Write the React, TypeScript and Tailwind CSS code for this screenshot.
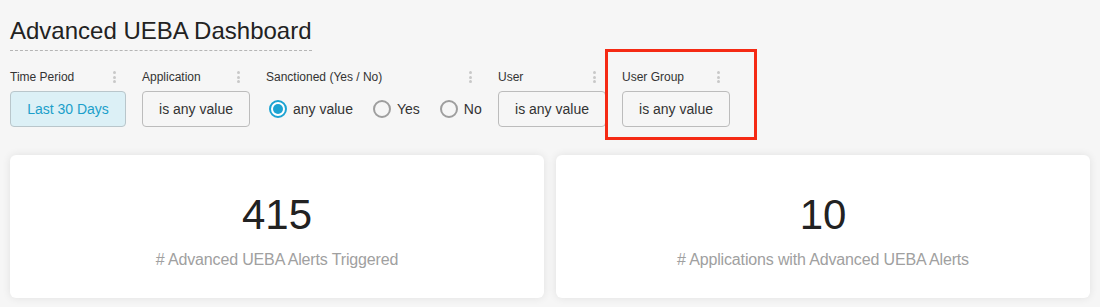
import React from "react";

const Kebab = () => (
  <span className="flex flex-col gap-[1.5px] mr-[10px]">
    <span className="block w-[3px] h-[3px] rounded-full bg-[#c8c8c8]" />
    <span className="block w-[3px] h-[3px] rounded-full bg-[#c8c8c8]" />
    <span className="block w-[3px] h-[3px] rounded-full bg-[#c8c8c8]" />
  </span>
);

const FilterLabel = ({ text }: { text: string }) => (
  <div className="flex items-center justify-between h-[18px] text-[12px] text-[#333] leading-[18px]">
    <span>{text}</span>
    <Kebab />
  </div>
);

const ValueButton = ({ text }: { text: string }) => (
  <div className="h-[36px] px-[16px] flex items-center justify-center border border-[#bcbcbc] rounded-[4px] text-[14px] text-[#333] whitespace-nowrap">
    {text}
  </div>
);

const Radio = ({ label, selected }: { label: string; selected?: boolean }) => (
  <div className="flex items-center gap-[6px] text-[14px] text-[#333]">
    {selected ? (
      <span className="w-[18px] h-[18px] rounded-full border-[2px] border-[#1ca3d2] flex items-center justify-center bg-white">
        <span className="w-[10px] h-[10px] rounded-full bg-[#1ca3d2]" />
      </span>
    ) : (
      <span className="w-[18px] h-[18px] rounded-full border-[2px] border-[#9e9e9e]" />
    )}
    <span>{label}</span>
  </div>
);

const Card = ({ value, label }: { value: string; label: string }) => (
  <div className="flex-1 bg-white rounded-[6px] shadow-[0_0_8px_rgba(0,0,0,0.09)] h-[143px] flex flex-col items-center pt-[39px]">
    <div className="text-[42px] leading-[42px] text-[#222]">{value}</div>
    <div className="mt-[14px] text-[16px] leading-[20px] text-[#a0a0a0] tracking-[-0.15px]">{label}</div>
  </div>
);

export default function App() {
  return (
    <div
      className="w-[1100px] h-[307px] bg-[#f6f6f6] overflow-hidden px-[10px] pt-[17px]"
      style={{ fontFamily: '"Liberation Sans", Arial, Helvetica, sans-serif' }}
    >
      <div className="inline-block text-[24px] leading-[28px] text-[#222] pb-[5px] border-b border-dashed border-[#b5b5b5]">
        Advanced UEBA Dashboard
      </div>

      <div className="flex mt-[17px] gap-[16px]">
        <div className="flex flex-col gap-[5px] w-[116px]">
          <FilterLabel text="Time Period" />
          <div className="h-[36px] flex items-center justify-center border border-[#b9c6cb] rounded-[4px] bg-[#dcf0f6] text-[14px] text-[#1b9fca]">
            Last 30 Days
          </div>
        </div>
        <div className="flex flex-col gap-[5px] w-[108px]">
          <FilterLabel text="Application" />
          <ValueButton text="is any value" />
        </div>
        <div className="flex flex-col gap-[5px] w-[216px]">
          <FilterLabel text="Sanctioned (Yes / No)" />
          <div className="h-[36px] flex items-center gap-[20px] pl-[3px]">
            <Radio label="any value" selected />
            <Radio label="Yes" />
            <Radio label="No" />
          </div>
        </div>
        <div className="flex flex-col gap-[5px] w-[108px]">
          <FilterLabel text="User" />
          <ValueButton text="is any value" />
        </div>
        <div className="relative flex flex-col gap-[5px] w-[108px]">
          <div className="absolute left-[-17px] top-[-19px] w-[152px] h-[91px] border-[3px] border-[#f52a14] pointer-events-none" />
          <FilterLabel text="User Group" />
          <ValueButton text="is any value" />
        </div>
      </div>

      <div className="flex gap-[12px] mt-[28px]">
        <Card value="415" label="# Advanced UEBA Alerts Triggered" />
        <Card value="10" label="# Applications with Advanced UEBA Alerts" />
      </div>
    </div>
  );
}
